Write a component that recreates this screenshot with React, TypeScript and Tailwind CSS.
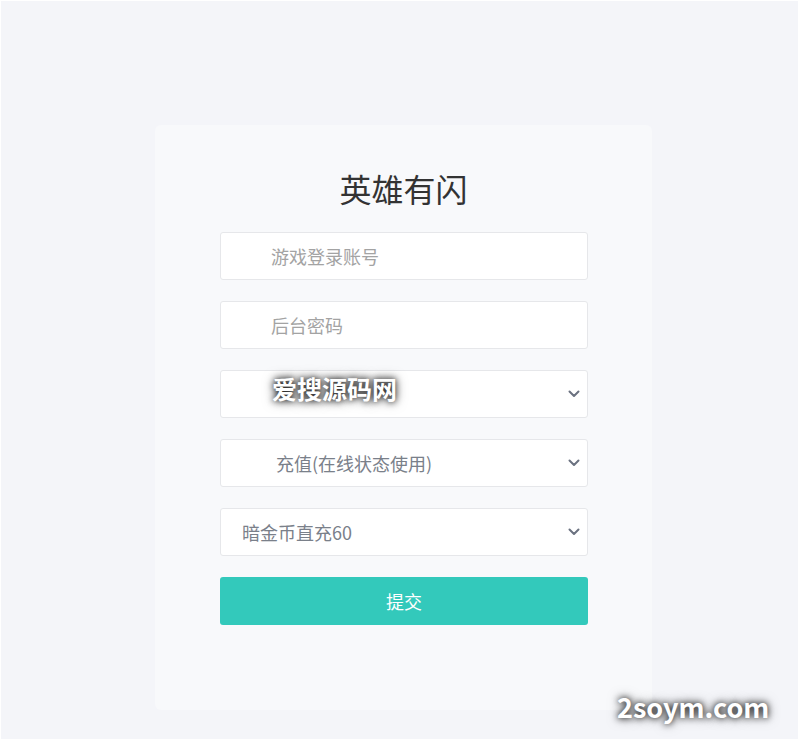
import React from "react";

const font = { fontFamily: '"Noto Sans CJK SC", "Noto Sans", sans-serif' };

function Chevron() {
  return (
    <svg width="12" height="8" viewBox="0 0 12 8" className="absolute right-[7px] top-1/2 -translate-y-1/2">
      <path d="M1.5 1.5 L6 6 L10.5 1.5" fill="none" stroke="#6b7280" strokeWidth="2" strokeLinecap="round" strokeLinejoin="round" />
    </svg>
  );
}

function Field({ text, color, indent, select }: { text?: string; color: string; indent: string; select?: boolean }) {
  return (
    <div className={`relative h-[48px] bg-white border border-[#e6e7ea] rounded-[3px] flex items-center ${indent}`}>
      {text && <span className={`text-[18px] leading-none ${color}`}>{text}</span>}
      {select && <Chevron />}
    </div>
  );
}

export default function App() {
  return (
    <div className="w-full h-[741px] bg-white pt-px pl-px pr-[2px] pb-[2px] relative" style={font}>
      <div className="w-full h-full bg-[#f4f5f9] pt-[124px] pl-[154px]">
        <div className="w-[497px] h-[585px] bg-[#f8f9fb] rounded-[6px] px-[65px] pt-[171px] relative">
          <div className="absolute left-0 right-0 top-[44px] text-center text-[32px] leading-[38px] text-[#333]">英雄有闪</div>
          <div className="w-[368px] flex flex-col gap-[21px] -mt-[64px]">
            <Field text="游戏登录账号" color="text-[#a3a3a3]" indent="pl-[50px]" />
            <Field text="后台密码" color="text-[#a3a3a3]" indent="pl-[50px]" />
            <Field color="text-[#7a808a]" indent="pl-[50px]" select />
            <Field text="充值(在线状态使用)" color="text-[#7a808a]" indent="pl-[55px]" select />
            <Field text="暗金币直充60" color="text-[#7a808a]" indent="pl-[21px]" select />
            <button className="h-[48px] w-full bg-[#33c9bb] rounded-[3px] text-white text-[18px] leading-none">提交</button>
          </div>
        </div>
      </div>
      <div className="absolute left-[272px] top-[372px] text-white font-bold text-[25px] leading-[32px] [text-shadow:0_0_6px_rgba(0,0,0,0.9),0_0_12px_rgba(0,0,0,0.6)]">爱搜源码网</div>
      <div className="absolute left-[617px] top-[690px] text-white font-bold text-[27px] leading-[34px] [text-shadow:0_0_6px_rgba(0,0,0,0.9),0_0_12px_rgba(0,0,0,0.6)]">2soym.com</div>
    </div>
  );
}
